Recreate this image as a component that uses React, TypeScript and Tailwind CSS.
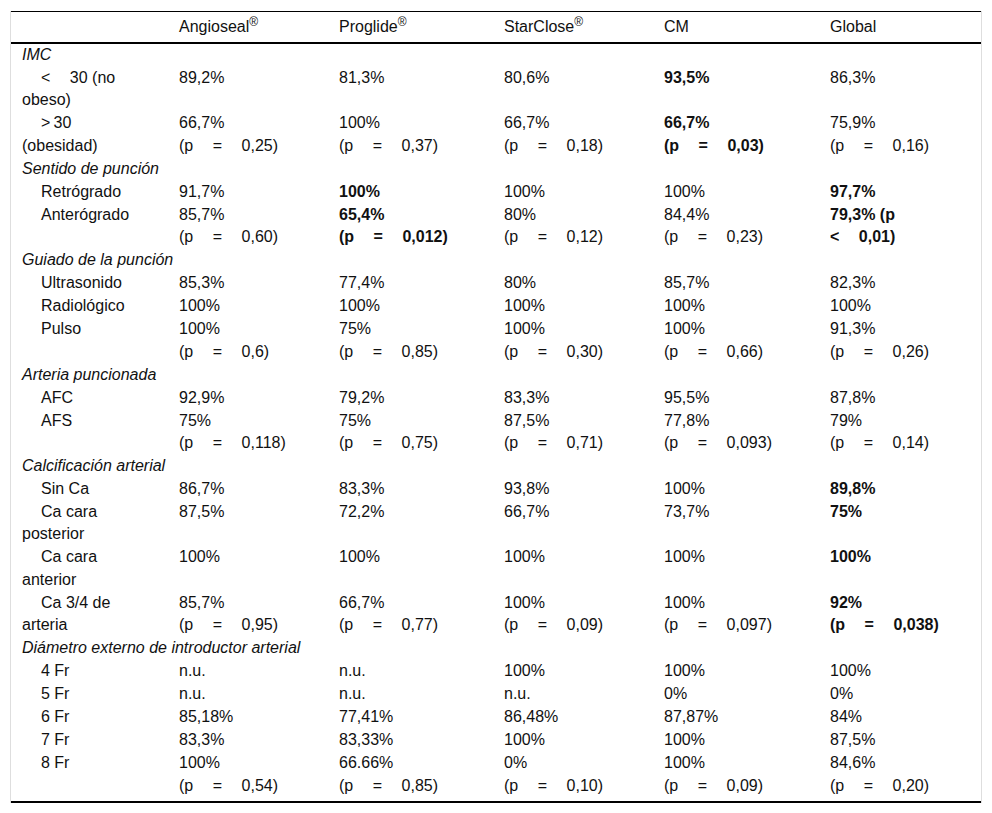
import { Fragment, type ReactNode } from "react";

type Cell = { lines: ReactNode[]; bold?: boolean };
type Row =
  | { kind: "cat"; label: string }
  | { kind: "item"; label: ReactNode[]; cells: Cell[]; last?: boolean };

// wide gap used around the operators in the p-values
const Gap = () => <span className="inline-block w-[19.5px]" />;

const pv = (v: string, op = "=") => (
  <>
    (p<Gap />{op}<Gap />{v})
  </>
);

const c = (...lines: ReactNode[]): Cell => ({ lines });
const b = (...lines: ReactNode[]): Cell => ({ lines, bold: true });

const headers = ["Angioseal", "Proglide", "StarClose", "CM", "Global"];
const registered = [true, true, true, false, false];

const rows: Row[] = [
  { kind: "cat", label: "IMC" },
  {
    kind: "item",
    label: [<>{"<"}<Gap />30 (no</>, "obeso)"],
    cells: [c("89,2%"), c("81,3%"), c("80,6%"), b("93,5%"), c("86,3%")],
  },
  {
    kind: "item",
    label: [">\u200930", "(obesidad)"],
    cells: [
      c("66,7%", pv("0,25")),
      c("100%", pv("0,37")),
      c("66,7%", pv("0,18")),
      b("66,7%", pv("0,03")),
      c("75,9%", pv("0,16")),
    ],
  },
  { kind: "cat", label: "Sentido de punción" },
  {
    kind: "item",
    label: ["Retrógrado"],
    cells: [c("91,7%"), b("100%"), c("100%"), c("100%"), b("97,7%")],
  },
  {
    kind: "item",
    label: ["Anterógrado"],
    cells: [
      c("85,7%", pv("0,60")),
      b("65,4%", pv("0,012")),
      c("80%", pv("0,12")),
      c("84,4%", pv("0,23")),
      b("79,3% (p", <>{"<"}<Gap />0,01)</>),
    ],
  },
  { kind: "cat", label: "Guiado de la punción" },
  {
    kind: "item",
    label: ["Ultrasonido"],
    cells: [c("85,3%"), c("77,4%"), c("80%"), c("85,7%"), c("82,3%")],
  },
  {
    kind: "item",
    label: ["Radiológico"],
    cells: [c("100%"), c("100%"), c("100%"), c("100%"), c("100%")],
  },
  {
    kind: "item",
    label: ["Pulso"],
    cells: [
      c("100%", pv("0,6")),
      c("75%", pv("0,85")),
      c("100%", pv("0,30")),
      c("100%", pv("0,66")),
      c("91,3%", pv("0,26")),
    ],
  },
  { kind: "cat", label: "Arteria puncionada" },
  {
    kind: "item",
    label: ["AFC"],
    cells: [c("92,9%"), c("79,2%"), c("83,3%"), c("95,5%"), c("87,8%")],
  },
  {
    kind: "item",
    label: ["AFS"],
    cells: [
      c("75%", pv("0,118")),
      c("75%", pv("0,75")),
      c("87,5%", pv("0,71")),
      c("77,8%", pv("0,093")),
      c("79%", pv("0,14")),
    ],
  },
  { kind: "cat", label: "Calcificación arterial" },
  {
    kind: "item",
    label: ["Sin Ca"],
    cells: [c("86,7%"), c("83,3%"), c("93,8%"), c("100%"), b("89,8%")],
  },
  {
    kind: "item",
    label: ["Ca cara", "posterior"],
    cells: [c("87,5%"), c("72,2%"), c("66,7%"), c("73,7%"), b("75%")],
  },
  {
    kind: "item",
    label: ["Ca cara", "anterior"],
    cells: [c("100%"), c("100%"), c("100%"), c("100%"), b("100%")],
  },
  {
    kind: "item",
    label: ["Ca 3/4 de", "arteria"],
    cells: [
      c("85,7%", pv("0,95")),
      c("66,7%", pv("0,77")),
      c("100%", pv("0,09")),
      c("100%", pv("0,097")),
      b("92%", pv("0,038")),
    ],
  },
  { kind: "cat", label: "Diámetro externo de introductor arterial" },
  {
    kind: "item",
    label: ["4 Fr"],
    cells: [c("n.u."), c("n.u."), c("100%"), c("100%"), c("100%")],
  },
  {
    kind: "item",
    label: ["5 Fr"],
    cells: [c("n.u."), c("n.u."), c("n.u."), c("0%"), c("0%")],
  },
  {
    kind: "item",
    label: ["6 Fr"],
    cells: [c("85,18%"), c("77,41%"), c("86,48%"), c("87,87%"), c("84%")],
  },
  {
    kind: "item",
    label: ["7 Fr"],
    cells: [c("83,3%"), c("83,33%"), c("100%"), c("100%"), c("87,5%")],
  },
  {
    kind: "item",
    label: ["8 Fr"],
    last: true,
    cells: [
      c("100%", pv("0,54")),
      c("66.66%", pv("0,85")),
      c("0%", pv("0,10")),
      c("100%", pv("0,09")),
      c("84,6%", pv("0,20")),
    ],
  },
];

const Lines = ({ lines }: { lines: ReactNode[] }) => (
  <>
    {lines.map((l, i) => (
      <Fragment key={i}>
        {i > 0 && <br />}
        {l}
      </Fragment>
    ))}
  </>
);

export default function App() {
  return (
    <div className="bg-white min-h-[813px] pt-[11px] px-[10px] font-['Liberation_Sans',Arial,sans-serif] text-[16px] leading-[22.4px] text-[#111]">
      <div className="border-x border-[#dedede]">
        <table className="w-full table-fixed border-separate border-spacing-0">
          <colgroup>
            <col className="w-[156px]" />
            <col className="w-[160px]" />
            <col className="w-[165px]" />
            <col className="w-[160px]" />
            <col className="w-[166px]" />
            <col className="w-[163px]" />
          </colgroup>
          <thead>
            <tr>
              <th className="border-t border-b-2 border-black pt-1 pb-[3.6px]" />
              {headers.map((h, i) => (
                <th
                  key={h}
                  className="border-t border-b-2 border-black pt-1 pb-[3.6px] pl-3 text-left font-normal whitespace-nowrap"
                >
                  {h}
                  {registered[i] && <sup className="text-[12px]">®</sup>}
                </th>
              ))}
            </tr>
          </thead>
          <tbody>
            {rows.map((row, ri) =>
              row.kind === "cat" ? (
                <tr key={ri}>
                  <td colSpan={6} className="pl-[11px] pb-[0.6px] italic whitespace-nowrap">
                    {row.label}
                  </td>
                </tr>
              ) : (
                <tr key={ri}>
                  <td
                    className={`align-top pl-[11px] indent-[19px] whitespace-nowrap ${
                      row.last ? "pb-[3.5px] border-b-2 border-black" : "pb-[0.6px]"
                    }`}
                  >
                    <Lines lines={row.label} />
                  </td>
                  {row.cells.map((cell, ci) => (
                    <td
                      key={ci}
                      className={`align-top pl-3 whitespace-nowrap ${cell.bold ? "font-bold" : ""} ${
                        row.last ? "pb-[3.5px] border-b-2 border-black" : "pb-[0.6px]"
                      }`}
                    >
                      <Lines lines={cell.lines} />
                    </td>
                  ))}
                </tr>
              )
            )}
          </tbody>
        </table>
      </div>
    </div>
  );
}
